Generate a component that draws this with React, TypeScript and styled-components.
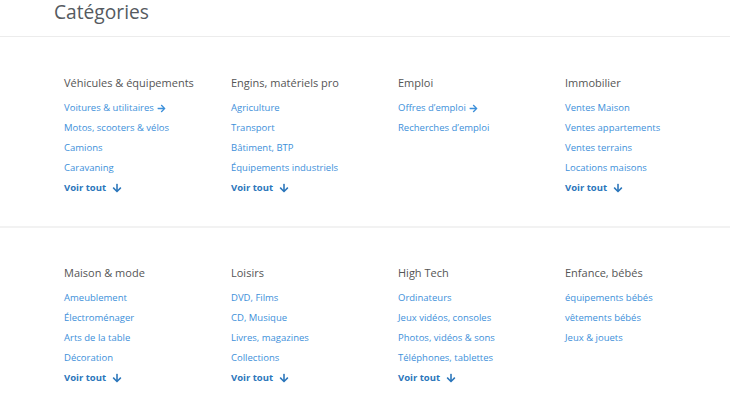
import React from 'react'
import styled, { createGlobalStyle } from 'styled-components'
import { FaArrowRight, FaArrowDown } from 'react-icons/fa'

type Link = { label: string, arrow?: boolean }
type Category = { title: string, links: Link[], more?: boolean }

const rows: Category[][] = [
  [
    {
      title: 'Véhicules & équipements',
      links: [
        { label: 'Voitures & utilitaires', arrow: true },
        { label: 'Motos, scooters & vélos' },
        { label: 'Camions' },
        { label: 'Caravaning' },
      ],
      more: true,
    },
    {
      title: 'Engins, matériels pro',
      links: [
        { label: 'Agriculture' },
        { label: 'Transport' },
        { label: 'Bâtiment, BTP' },
        { label: 'Équipements industriels' },
      ],
      more: true,
    },
    {
      title: 'Emploi',
      links: [
        { label: 'Offres d’emploi', arrow: true },
        { label: 'Recherches d’emploi' },
      ],
    },
    {
      title: 'Immobilier',
      links: [
        { label: 'Ventes Maison' },
        { label: 'Ventes appartements' },
        { label: 'Ventes terrains' },
        { label: 'Locations maisons' },
      ],
      more: true,
    },
  ],
  [
    {
      title: 'Maison & mode',
      links: [
        { label: 'Ameublement' },
        { label: 'Électroménager' },
        { label: 'Arts de la table' },
        { label: 'Décoration' },
      ],
      more: true,
    },
    {
      title: 'Loisirs',
      links: [
        { label: 'DVD, Films' },
        { label: 'CD, Musique' },
        { label: 'Livres, magazines' },
        { label: 'Collections' },
      ],
      more: true,
    },
    {
      title: 'High Tech',
      links: [
        { label: 'Ordinateurs' },
        { label: 'Jeux vidéos, consoles' },
        { label: 'Photos, vidéos & sons' },
        { label: 'Téléphones, tablettes' },
      ],
      more: true,
    },
    {
      title: 'Enfance, bébés',
      links: [
        { label: 'équipements bébés' },
        { label: 'vêtements bébés' },
        { label: 'Jeux & jouets' },
      ],
    },
  ],
]

function App() {
  return (
    <>
      <GlobalStyle />
      <Header>
        <Title>Catégories</Title>
      </Header>
      {rows.map((row, i) => (
        <Section key={i} first={i === 0} last={i === rows.length - 1}>
          {row.map(cat => (
            <Column key={cat.title}>
              <Heading>{cat.title}</Heading>
              {cat.links.map(link => (
                <LinkItem key={link.label}>
                  {link.label}
                  {link.arrow && <FaArrowRight size={9} />}
                </LinkItem>
              ))}
              {cat.more && (
                <More>
                  Voir tout
                  <FaArrowDown size={10} />
                </More>
              )}
            </Column>
          ))}
        </Section>
      ))}
    </>
  )
}

export default App


const GlobalStyle = createGlobalStyle`
  body {
    margin: 0;
    background: #fff;
    font-family: "Open Sans", "Noto Sans", sans-serif;
  }
`

const Header = styled.div`
  height: 36px;
  padding-left: 54px;
  border-bottom: 1px solid #ececec;
`

const Title = styled.h1`
  margin: 0;
  font-size: 19.2px;
  line-height: 24px;
  font-weight: 400;
  color: #555a5f;
`

const Section = styled.div<{ first?: boolean, last?: boolean }>`
  display: grid;
  grid-template-columns: repeat(4, 167px);
  padding: ${p => p.first ? '36px' : '35px'} 0 ${p => p.last ? '20px' : '28px'} 64px;
  border-bottom: ${p => p.last ? 'none' : '2px solid #f2f2f2'};
`

const Column = styled.div`
  display: flex;
  flex-direction: column;
`

const Heading = styled.h3`
  margin: 0 0 5px;
  font-size: 11px;
  line-height: 20px;
  font-weight: 400;
  color: #555;
  white-space: nowrap;
`

const LinkItem = styled.a`
  display: flex;
  align-items: center;
  gap: 3px;
  font-size: 9.5px;
  line-height: 20px;
  color: #3d90da;
  white-space: nowrap;
  cursor: pointer;
`

const More = styled(LinkItem)`
  gap: 6px;
  font-weight: 700;
  color: #2b76bb;
`
